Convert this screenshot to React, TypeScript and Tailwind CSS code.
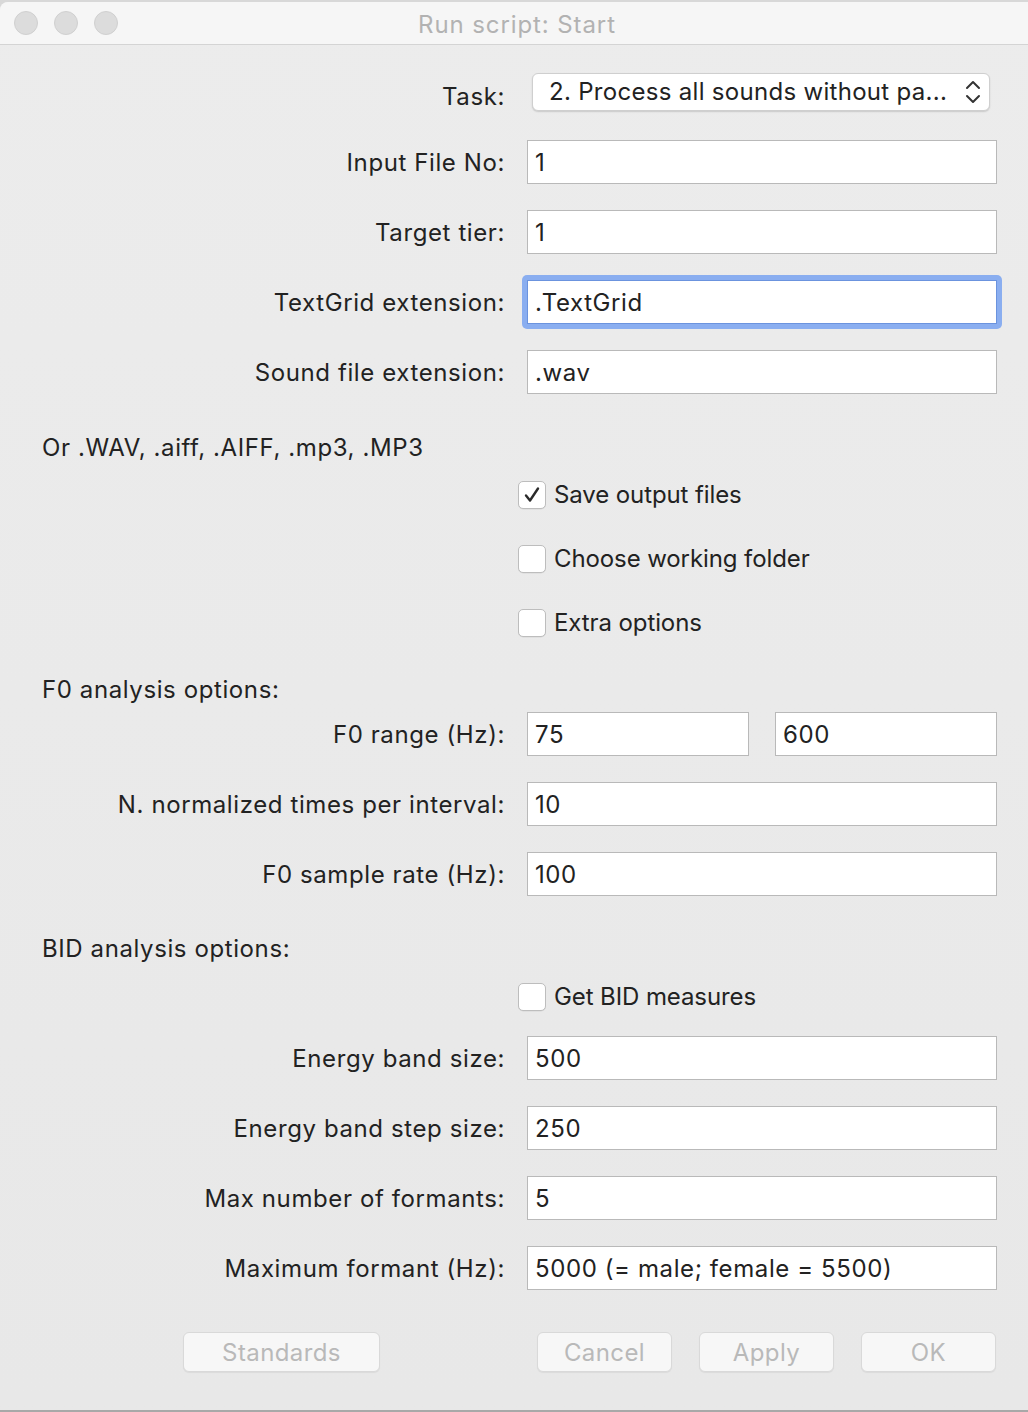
import React from "react";

const font = { fontFamily: "Inter, 'Noto Sans', sans-serif" };

function Field({ label, value, top, focus }: { label: string; value: string; top: string; focus?: boolean }) {
  return (
    <div className={`flex items-center h-[44px] ${top}`}>
      <div className="w-[505px] text-right text-[24px] leading-none text-[#222222] tracking-[0.6px] pt-[2px]">{label}</div>
      <div className="ml-[22px] relative">
        {focus && <div className="absolute -inset-[5px] rounded-[5px] bg-[#8aaef0]" />}
        <div className={`relative w-[470px] h-[44px] bg-white border ${focus ? "border-[#6b93de]" : "border-[#b9b9b9]"} flex items-center pl-[7px] pt-[2px] text-[24px] tracking-[0.6px] text-[#222222]`}>
          {value}
        </div>
      </div>
    </div>
  );
}

function Check({ label, checked, top }: { label: string; checked?: boolean; top: string }) {
  return (
    <div className={`flex items-center h-[32px] ${top}`}>
      <div className="w-[518px]" />
      <div className="w-[28px] h-[28px] rounded-[5px] bg-white border border-[#bdbdbd] flex items-center justify-center shadow-[0_0.5px_0.5px_rgba(0,0,0,0.08)]">
        {checked && (
          <svg width="20" height="20" viewBox="0 0 20 20">
            <path d="M4 10.5 L8 15.5 L16 3.5" fill="none" stroke="#2a2a2a" strokeWidth="2.4" strokeLinecap="round" strokeLinejoin="round" />
          </svg>
        )}
      </div>
      <div className="ml-[8px] text-[24px] tracking-[-0.1px] text-[#222222] leading-none">{label}</div>
    </div>
  );
}

function Btn({ label, w, ml }: { label: string; w: string; ml: string }) {
  return (
    <div className={`${w} ${ml} h-[40px] rounded-[6px] bg-[#f7f7f7] border border-[#d9d9d9] shadow-[0_1px_1px_rgba(0,0,0,0.06)] flex items-center justify-center pt-[2px] text-[24px] tracking-[0.4px] text-[#b9b9b9]`}>
      {label}
    </div>
  );
}

export default function App() {
  return (
    <div className="w-[1028px] h-[1412px] bg-[#d8d8d8] overflow-hidden" style={font}>
      <div className="w-[1028px] h-[1410px] mt-[2px] flex flex-col rounded-tl-[8px] border-b-[2px] border-[#a8a8a8] bg-gradient-to-b from-[#ececec] to-[#e8e8e8]">
        {/* title bar */}
        <div className="h-[43px] bg-[#f6f6f6] border-b border-[#d4d4d4] flex items-center relative rounded-tl-[8px]">
          <div className="flex gap-[16px] ml-[14px]">
            <div className="w-[24px] h-[24px] rounded-full bg-[#dcdcdc] border border-[#d0d0d0]" />
            <div className="w-[24px] h-[24px] rounded-full bg-[#dcdcdc] border border-[#d0d0d0]" />
            <div className="w-[24px] h-[24px] rounded-full bg-[#dcdcdc] border border-[#d0d0d0]" />
          </div>
          <div className="absolute left-0 right-0 top-0 h-[43px] flex items-center justify-center pl-[6px] pt-[2px] text-[24px] tracking-[0.9px] text-[#b2b2b2] pointer-events-none">
            Run script: Start
          </div>
        </div>

        {/* Task select */}
        <div className="flex items-center h-[38px] mt-[28px]">
          <div className="w-[505px] text-right text-[24px] tracking-[0.6px] leading-none text-[#222222] pt-[10px]">Task:</div>
          <div className="ml-[27px] w-[458px] h-[38px] rounded-[6px] bg-white border border-[#cfcfcf] shadow-[0_1px_1.5px_rgba(0,0,0,0.15)] flex items-center pl-[16px] pr-[8px] text-[24px] tracking-[0.3px] text-[#222222]">
            <span className="flex-1">2. Process all sounds without pa...</span>
            <svg width="16" height="26" viewBox="0 0 16 26">
              <path d="M2 9 L8 3 L14 9" fill="none" stroke="#333" strokeWidth="2" strokeLinecap="round" strokeLinejoin="round" />
              <path d="M2 17 L8 23 L14 17" fill="none" stroke="#333" strokeWidth="2" strokeLinecap="round" strokeLinejoin="round" />
            </svg>
          </div>
        </div>

        <Field label="Input File No:" value="1" top="mt-[29px]" />
        <Field label="Target tier:" value="1" top="mt-[26px]" />
        <Field label="TextGrid extension:" value=".TextGrid" top="mt-[26px]" focus />
        <Field label="Sound file extension:" value=".wav" top="mt-[26px]" />

        <div className="h-[32px] mt-[38px] flex items-center pl-[42px] text-[24px] tracking-[0.6px] text-[#222222]">Or .WAV, .aiff, .AIFF, .mp3, .MP3</div>

        <Check label="Save output files" checked top="mt-[15px]" />
        <Check label="Choose working folder" top="mt-[32px]" />
        <Check label="Extra options" top="mt-[32px]" />

        <div className="h-[32px] mt-[35px] flex items-center pl-[42px] text-[24px] tracking-[0.6px] text-[#222222]">F0 analysis options:</div>

        <div className="flex items-center h-[44px] mt-[6px]">
          <div className="w-[505px] text-right text-[24px] tracking-[0.6px] leading-none text-[#222222] pt-[2px]">F0 range (Hz):</div>
          <div className="ml-[22px] w-[222px] h-[44px] bg-white border border-[#b9b9b9] flex items-center pl-[7px] pt-[2px] text-[24px] tracking-[0.6px] text-[#222222]">75</div>
          <div className="ml-[26px] w-[222px] h-[44px] bg-white border border-[#b9b9b9] flex items-center pl-[7px] pt-[2px] text-[24px] tracking-[0.6px] text-[#222222]">600</div>
        </div>
        <Field label="N. normalized times per interval:" value="10" top="mt-[26px]" />
        <Field label="F0 sample rate (Hz):" value="100" top="mt-[26px]" />

        <div className="h-[32px] mt-[37px] flex items-center pl-[42px] text-[24px] tracking-[0.6px] text-[#222222]">BID analysis options:</div>
        <Check label="Get BID measures" top="mt-[16px]" />

        <Field label="Energy band size:" value="500" top="mt-[23px]" />
        <Field label="Energy band step size:" value="250" top="mt-[26px]" />
        <Field label="Max number of formants:" value="5" top="mt-[26px]" />
        <Field label="Maximum formant (Hz):" value="5000 (= male; female = 5500)" top="mt-[26px]" />

        <div className="flex items-center mt-[42px]">
          <Btn label="Standards" w="w-[197px]" ml="ml-[183px]" />
          <Btn label="Cancel" w="w-[135px]" ml="ml-[157px]" />
          <Btn label="Apply" w="w-[135px]" ml="ml-[27px]" />
          <Btn label="OK" w="w-[135px]" ml="ml-[27px]" />
        </div>
      </div>
    </div>
  );
}
